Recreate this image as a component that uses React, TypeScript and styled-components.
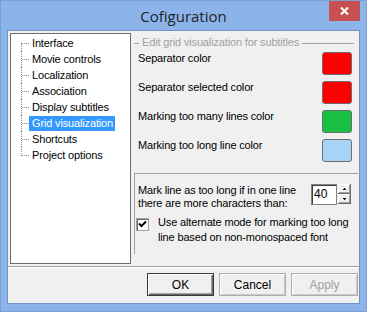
import React from "react";
import styled, { createGlobalStyle, css } from "styled-components";

const Global = createGlobalStyle`
  html, body { margin: 0; padding: 0; background: #ffffff; }
  body {
    font-family: "Liberation Sans", Arial, sans-serif;
    font-size: 11px;
    letter-spacing: -0.15px;
    color: #000;
  }
  #root { width: 367px; height: 312px; }
  * { box-sizing: border-box; }
`;

const Window = styled.div`
  width: 367px;
  height: 312px;
  background: #8cb4ea;
  border: 1px solid #7aa0d6;
  display: flex;
  flex-direction: column;
`;

const TitleBar = styled.div`
  height: 29px;
  display: grid;
  grid-template-columns: 1fr auto 1fr;
  align-items: start;
`;

const Title = styled.div`
  grid-column: 2;
  padding-top: 5px;
  font-family: "Open Sans", "Noto Sans", sans-serif;
  font-size: 15px;
  letter-spacing: 0;
  line-height: 20px;
  color: #1f1f1f;
`;

const CloseButton = styled.div`
  grid-column: 3;
  justify-self: end;
  width: 31px;
  height: 20px;
  margin-right: 6px;
  background: #c75050;
  display: flex;
  align-items: center;
  justify-content: center;
`;

const Client = styled.div`
  flex: 1;
  margin: 0 6px 7px 6px;
  background: #f0f0f0;
  border: 1px solid #6f93c8;
  display: flex;
  flex-direction: column;
`;

const MainRow = styled.div`
  display: flex;
  gap: 3px;
  height: 231px;
  margin: 2px 0 0 2px;
`;

const Tree = styled.ul`
  list-style: none;
  margin: 0;
  padding: 1px 0 0 0;
  width: 121px;
  height: 231px;
  background: #fff;
  border: 1px solid #6d6d6d;
`;

const TreeItem = styled.li`
  display: flex;
  height: 16px;
  align-items: center;
`;

const Connector = styled.span<{ $first?: boolean; $last?: boolean }>`
  position: relative;
  align-self: stretch;
  width: 8px;
  margin-left: 10px;
  &::before {
    content: "";
    position: absolute;
    left: 1px;
    right: 0;
    top: 8px;
    border-top: 1px dotted #8a8a8a;
  }
  &::after {
    content: "";
    position: absolute;
    left: 0;
    top: ${(p) => (p.$first ? "8px" : "0")};
    bottom: ${(p) => (p.$last ? "7px" : "0")};
    border-left: 1px dotted #8a8a8a;
  }
`;

const ItemLabel = styled.span<{ $selected?: boolean }>`
  padding: 0 2px 0 3px;
  height: 15px;
  line-height: 15px;
  white-space: nowrap;
  ${(p) =>
    p.$selected &&
    css`
      background: #3399ff;
      color: #fff;
    `}
`;

const Panel = styled.div`
  width: 224px;
  display: flex;
  flex-direction: column;
`;

const GroupHeader = styled.div`
  height: 19px;
  margin-right: 4px;
  display: flex;
  align-items: center;
  color: #a0a0a0;
  line-height: 13px;
  &::before {
    content: "";
    width: 5px;
    border-top: 1px solid #a0a0a0;
    margin-top: 1px;
  }
  &::after {
    content: "";
    flex: 1;
    border-top: 1px solid #a0a0a0;
    margin-top: 1px;
  }
`;

const HeaderText = styled.span`
  padding: 0 3px;
`;

const ColorRows = styled.div`
  display: flex;
  flex-direction: column;
  gap: 6px;
`;

const ColorRow = styled.div`
  display: flex;
  align-items: flex-start;
  justify-content: space-between;
  height: 23px;
  padding: 0 6px 0 4px;
`;

const RowLabel = styled.span`
  line-height: 13px;
`;

const Swatch = styled.div<{ $color: string }>`
  width: 30px;
  height: 23px;
  border: 1px solid #6e6e6e;
  border-radius: 3px;
  background: ${(p) => p.$color};
`;

const LowerBox = styled.div`
  margin-top: 11px;
  height: 81px;
  border-top: 1px solid #a0a0a0;
  border-left: 1px solid #a0a0a0;
  display: flex;
  flex-direction: column;
`;

const SpinRow = styled.div`
  display: flex;
  align-items: flex-start;
  padding: 10px 7px 0 3px;
`;

const SpinLabel = styled.div`
  flex: 1;
  line-height: 13px;
  white-space: nowrap;
`;

const Spinner = styled.div`
  display: flex;
`;

const SpinEdit = styled.div`
  width: 26px;
  height: 21px;
  background: #fff;
  border: 1px solid #828282;
  box-shadow: inset 1px 1px 0 #404040;
  font-size: 12px;
  letter-spacing: 0;
  line-height: 19px;
  padding-left: 2px;
`;

const SpinButtons = styled.div`
  display: flex;
  flex-direction: column;
  margin-left: 1px;
`;

const SpinButton = styled.div`
  width: 13px;
  height: 10px;
  background: #f0f0f0;
  border-right: 1px solid #696969;
  border-bottom: 1px solid #696969;
  box-shadow: inset 1px 1px 0 #fff, inset -1px -1px 0 #a0a0a0;
  display: flex;
  align-items: center;
  justify-content: center;
`;

const CheckRow = styled.div`
  display: flex;
  align-items: flex-start;
  margin-top: 5px;
  padding-left: 1px;
`;

const CheckBox = styled.div`
  width: 13px;
  height: 13px;
  margin-top: 3px;
  background: #fff;
  border: 1px solid #a0a0a0;
  box-shadow: inset 1px 1px 0 #696969;
  display: flex;
  align-items: center;
  justify-content: center;
  flex-shrink: 0;
`;

const CheckLabel = styled.div`
  margin-left: 9px;
  line-height: 15px;
  white-space: nowrap;
`;

const Separator = styled.div`
  margin-top: 2px;
  height: 2px;
  border-top: 1px solid #a0a0a0;
  border-bottom: 1px solid #ffffff;
`;

const ButtonRow = styled.div`
  display: flex;
  justify-content: flex-end;
  gap: 5px;
  margin-top: 5px;
  padding-right: 1px;
`;

const Button = styled.div<{ $default?: boolean; $disabled?: boolean }>`
  width: 67px;
  height: 23px;
  display: flex;
  align-items: center;
  justify-content: center;
  background: #f0f0f0;
  font-size: 12px;
  letter-spacing: 0;
  color: ${(p) => (p.$disabled ? "#a0a0a0" : "#000")};
  border: 1px solid ${(p) => (p.$default ? "#3a3a3a" : "#adadad")};
  box-shadow: ${(p) =>
    p.$default
      ? "inset 1px 1px 0 #fff, inset -1px -1px 0 #696969, inset -2px -2px 0 #a0a0a0"
      : "inset 1px 1px 0 #fff, inset -1px -1px 0 #c8c8c8"};
`;

const items = [
  "Interface",
  "Movie controls",
  "Localization",
  "Association",
  "Display subtitles",
  "Grid visualization",
  "Shortcuts",
  "Project options",
];

const colors: [string, string][] = [
  ["Separator color", "#ff0000"],
  ["Separator selected color", "#ff0000"],
  ["Marking too many lines color", "#19c043"],
  ["Marking too long line color", "#a8d4f8"],
];

export default function App() {
  return (
    <>
      <Global />
      <Window>
        <TitleBar>
          <Title>Cofiguration</Title>
          <CloseButton>
            <svg width="9" height="8" viewBox="0 0 9 8">
              <path d="M1 0.5 L8 7.5 M8 0.5 L1 7.5" stroke="#fff" strokeWidth="2" />
            </svg>
          </CloseButton>
        </TitleBar>
        <Client>
          <MainRow>
            <Tree>
              {items.map((t, i) => (
                <TreeItem key={t}>
                  <Connector $first={i === 0} $last={i === items.length - 1} />
                  <ItemLabel $selected={t === "Grid visualization"}>{t}</ItemLabel>
                </TreeItem>
              ))}
            </Tree>
            <Panel>
              <GroupHeader>
                <HeaderText>Edit grid visualization for subtitles</HeaderText>
              </GroupHeader>
              <ColorRows>
                {colors.map(([label, c]) => (
                  <ColorRow key={label}>
                    <RowLabel>{label}</RowLabel>
                    <Swatch $color={c} />
                  </ColorRow>
                ))}
              </ColorRows>
              <LowerBox>
                <SpinRow>
                  <SpinLabel>
                    Mark line as too long if in one line
                    <br />
                    there are more characters than:
                  </SpinLabel>
                  <Spinner>
                    <SpinEdit>40</SpinEdit>
                    <SpinButtons>
                      <SpinButton>
                        <svg width="3" height="2" viewBox="0 0 3 2">
                          <path d="M1 0 H2 V1 H3 V2 H0 V1 H1 Z" fill="#000" />
                        </svg>
                      </SpinButton>
                      <SpinButton>
                        <svg width="3" height="2" viewBox="0 0 3 2">
                          <path d="M0 0 H3 V1 H2 V2 H1 V1 H0 Z" fill="#000" />
                        </svg>
                      </SpinButton>
                    </SpinButtons>
                  </Spinner>
                </SpinRow>
                <CheckRow>
                  <CheckBox>
                    <svg width="9" height="9" viewBox="0 0 9 9">
                      <path d="M1 3.5 L3.5 6 L8 1.5" stroke="#000" strokeWidth="2" fill="none" />
                    </svg>
                  </CheckBox>
                  <CheckLabel>
                    Use alternate mode for marking too long
                    <br />
                    line based on non-monospaced font
                  </CheckLabel>
                </CheckRow>
              </LowerBox>
            </Panel>
          </MainRow>
          <Separator />
          <ButtonRow>
            <Button $default>OK</Button>
            <Button>Cancel</Button>
            <Button $disabled>Apply</Button>
          </ButtonRow>
        </Client>
      </Window>
    </>
  );
}
